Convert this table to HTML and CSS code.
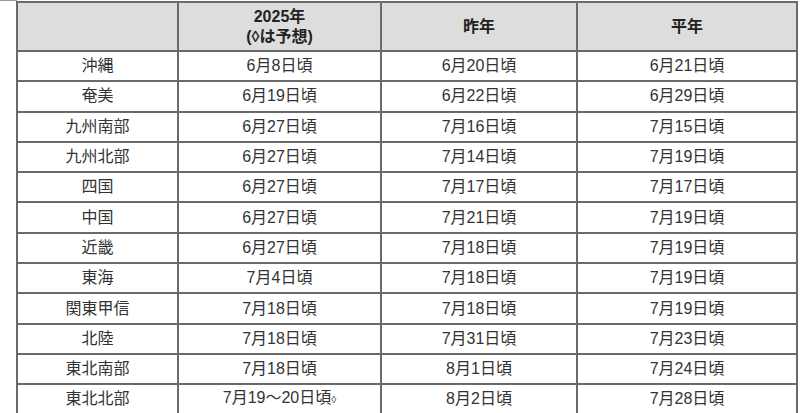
FILE: index.html
```html
<!DOCTYPE html>
<html lang="ja">
<head>
<meta charset="utf-8">
<link rel="stylesheet" href="styles.css">
</head>
<body>
<div class="topline"></div>
<table class="rainy">
  <colgroup>
    <col class="c1"><col class="c2"><col class="c3"><col class="c4">
  </colgroup>
  <thead>
    <tr><th></th><th>2025年<br>(◊は予想)</th><th>昨年</th><th>平年</th></tr>
  </thead>
  <tbody>
    <tr><td>沖縄</td><td>6月8日頃</td><td>6月20日頃</td><td>6月21日頃</td></tr>
    <tr><td>奄美</td><td>6月19日頃</td><td>6月22日頃</td><td>6月29日頃</td></tr>
    <tr><td>九州南部</td><td>6月27日頃</td><td>7月16日頃</td><td>7月15日頃</td></tr>
    <tr><td>九州北部</td><td>6月27日頃</td><td>7月14日頃</td><td>7月19日頃</td></tr>
    <tr><td>四国</td><td>6月27日頃</td><td>7月17日頃</td><td>7月17日頃</td></tr>
    <tr><td>中国</td><td>6月27日頃</td><td>7月21日頃</td><td>7月19日頃</td></tr>
    <tr><td>近畿</td><td>6月27日頃</td><td>7月18日頃</td><td>7月19日頃</td></tr>
    <tr><td>東海</td><td>7月4日頃</td><td>7月18日頃</td><td>7月19日頃</td></tr>
    <tr><td>関東甲信</td><td>7月18日頃</td><td>7月18日頃</td><td>7月19日頃</td></tr>
    <tr><td>北陸</td><td>7月18日頃</td><td>7月31日頃</td><td>7月23日頃</td></tr>
    <tr><td>東北南部</td><td>7月18日頃</td><td>8月1日頃</td><td>7月24日頃</td></tr>
    <tr><td>東北北部</td><td>7月19～20日頃<span class="pred">◊</span></td><td>8月2日頃</td><td>7月28日頃</td></tr>
  </tbody>
</table>
</body>
</html>
```
FILE: styles.css
```css
html, body {
  margin: 0;
  padding: 0;
  background: #fff;
}
body {
  font-family: "Liberation Sans", Arial, "Noto Sans CJK JP", sans-serif;
  color: #333;
  overflow: hidden;
}
.topline {
  height: 1px;
  background: #999;
  width: 17px;
}
.rainy {
  border-collapse: collapse;
  margin-left: 16px;
  width: 780px;
  table-layout: fixed;
}
.c1 { width: 161px; }
.c2 { width: 203px; }
.c3 { width: 196px; }
.c4 { width: 220px; }
.rainy th, .rainy td {
  border: 2px solid #6a6a6a;
  text-align: center;
  padding: 0;
}
.rainy thead tr {
  border-top: 2px solid #8a8a8a;
}
.rainy th {
  background: #dddddd;
  font-weight: bold;
  font-size: 16px;
  line-height: 20px;
  height: 47px;
  color: #222;
}
.rainy td {
  font-size: 16px;
  height: 28.3px;
  line-height: 20px;
}
.pred {
  font-size: 10px;
}
```
